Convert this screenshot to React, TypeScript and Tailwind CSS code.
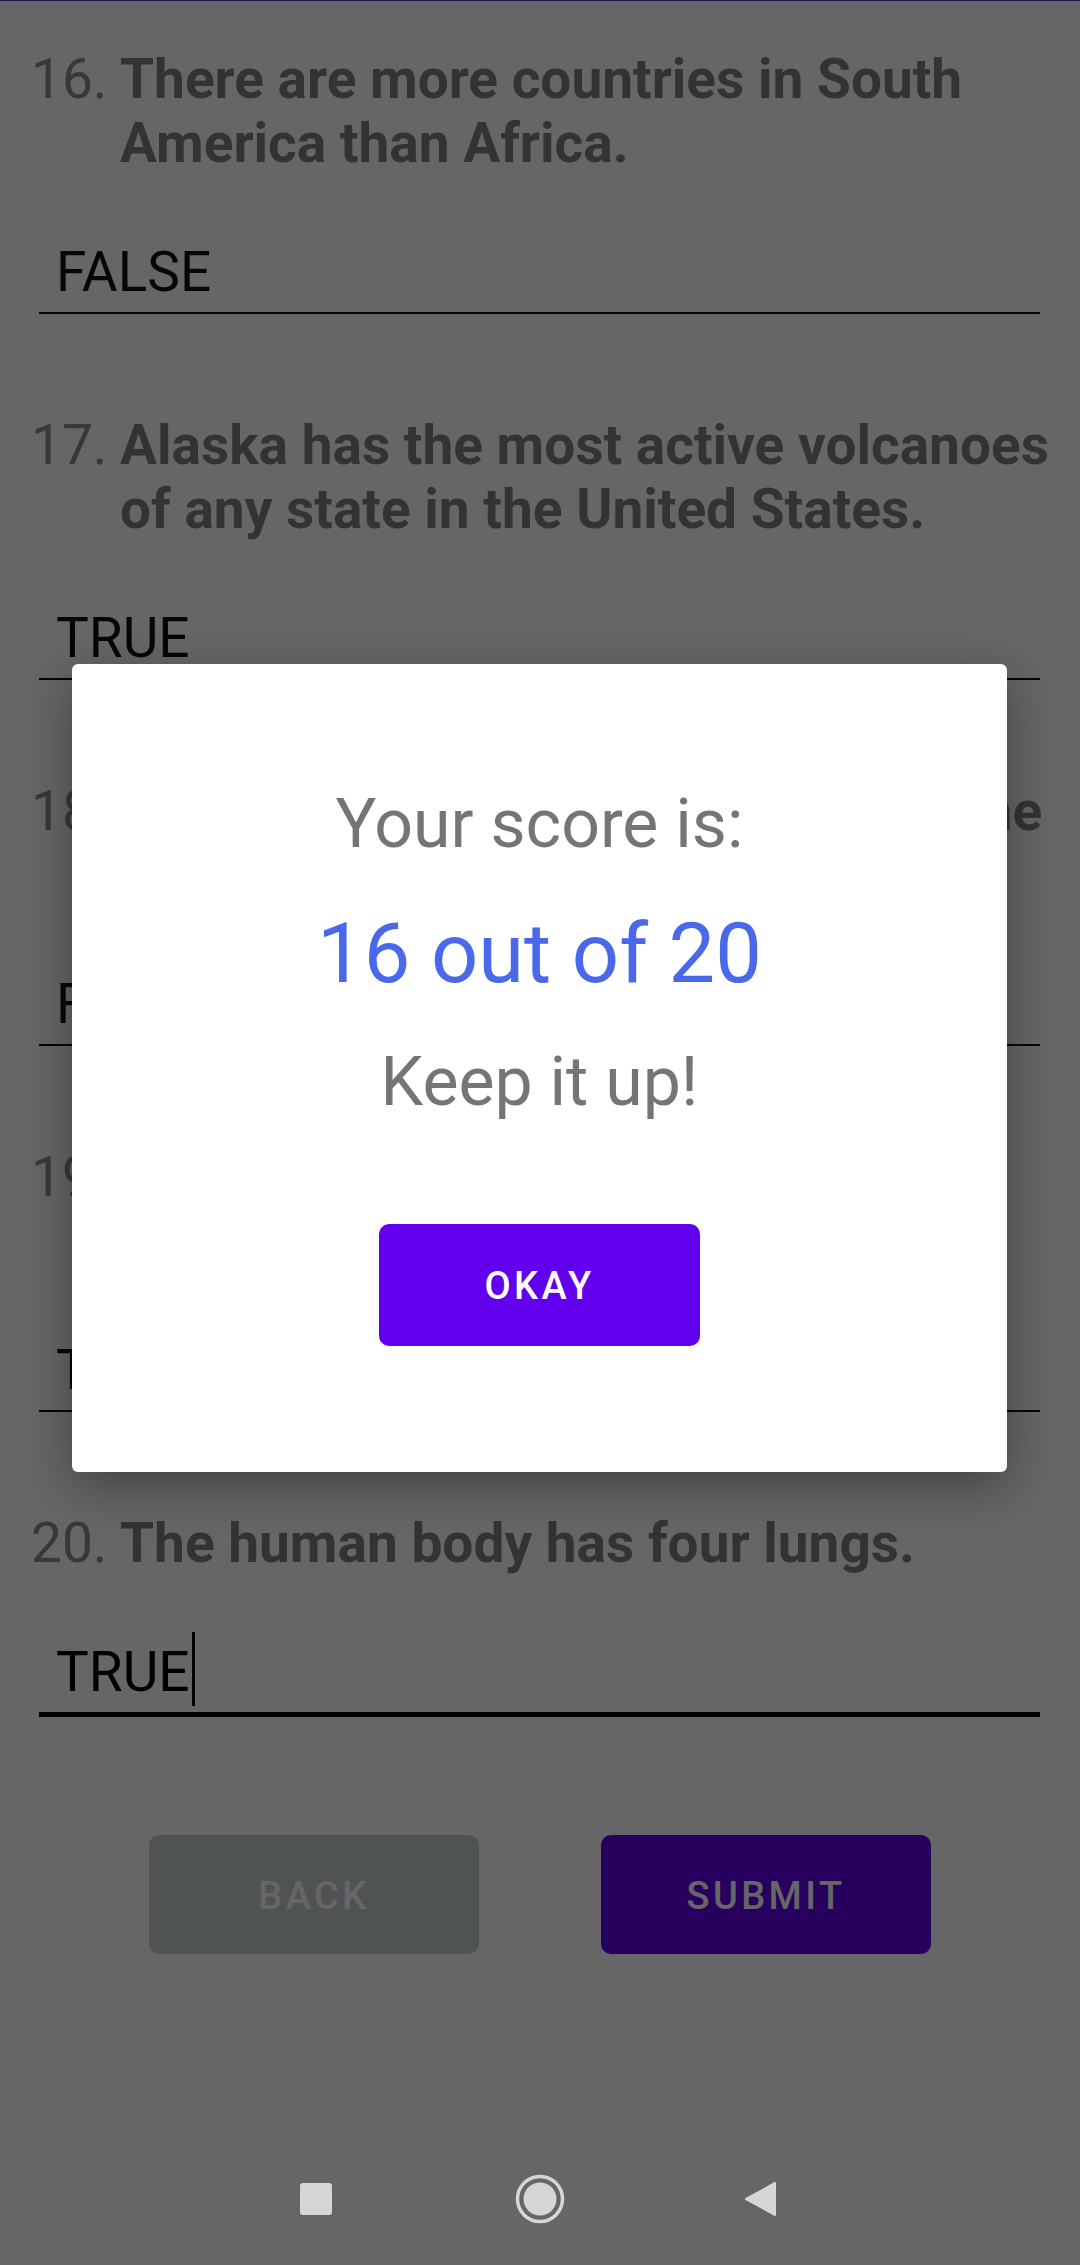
import React from "react";

// Quiz questions shown behind the score dialog
type Question = {
  id: number;
  lines: string[];
  answer: string;
  focused?: boolean;
};

const questions: Question[] = [
  { id: 16, lines: ["There are more countries in South", "America than Africa."], answer: "FALSE" },
  { id: 17, lines: ["Alaska has the most active volcanoes", "of any state in the United States."], answer: "TRUE" },
  { id: 18, lines: ["A human skull is made up of only one", "bone."], answer: "FALSE" },
  { id: 19, lines: ["Venus is the hottest planet in our", "solar system."], answer: "TRUE" },
  { id: 20, lines: ["The human body has four lungs."], answer: "TRUE", focused: true },
];

function QuestionBlock({ q, first }: { q: Question; first: boolean }) {
  return (
    <div className={first ? "pl-[31px]" : "pl-[31px] mt-[99px]"}>
      <div className="flex text-[55px] leading-[64px]">
        <span className="w-[89px] shrink-0 text-[#8c8c8c]">{q.id}.</span>
        <div className="font-bold text-[#808080]">
          {q.lines.map((line) => (
            <div key={line} className="whitespace-nowrap">
              {line}
            </div>
          ))}
        </div>
      </div>
      <div
        className={
          q.focused
            ? "mt-[65px] ml-[8px] w-[1001px] pl-[17px] pb-[8px] border-b-[5px] border-black text-[55px] leading-[64px] text-black"
            : "mt-[65px] ml-[8px] w-[1001px] pl-[17px] pb-[8px] border-b-2 border-[#111] text-[55px] leading-[64px] text-[#111]"
        }
      >
        <span className="relative">
          {q.answer}
          {q.focused && <span className="absolute left-full top-[-8px] ml-[2px] h-[74px] w-[3px] bg-black" />}
        </span>
      </div>
    </div>
  );
}

export default function App() {
  return (
    <div className="relative w-[1080px] h-[2265px] flex flex-col overflow-hidden font-['Roboto',sans-serif]">
      {/* sliver of the status bar */}
      <div className="h-px shrink-0 bg-[#1e1245]" />

      <main className="relative flex-1 bg-white">
        <div className="pt-[46px]">
          {questions.map((q, i) => (
            <QuestionBlock key={q.id} q={q} first={i === 0} />
          ))}

          <div className="mt-[118px] flex justify-center gap-[122px]">
            <button className="w-[330px] h-[119px] pt-[4px] rounded-[10px] bg-[#c8cfd2] text-white text-[38px] font-medium tracking-[0.09em]">
              BACK
            </button>
            <button className="w-[330px] h-[119px] pt-[4px] rounded-[10px] bg-[#6200ee] text-white text-[38px] font-medium tracking-[0.09em]">
              SUBMIT
            </button>
          </div>
        </div>

        {/* dim behind the dialog */}
        <div className="absolute inset-0 bg-black/60" />

        {/* score dialog */}
        <div className="absolute left-[72px] top-[663px] w-[935px] h-[808px] rounded-[6px] bg-white shadow-[0_14px_48px_rgba(0,0,0,0.35)] flex flex-col items-center pt-[120px]">
          <p className="text-[68px] leading-[80px] text-[#757575]">Your score is:</p>
          <p className="mt-[41px] text-[83px] leading-[97px] text-[#4a68ea]">16 out of 20</p>
          <p className="mt-[40px] text-[68px] leading-[80px] text-[#757575]">Keep it up!</p>
          <button className="mt-[102px] w-[321px] h-[122px] pt-[3px] rounded-[10px] bg-[#6200ee] text-white text-[38px] font-medium tracking-[0.09em]">
            OKAY
          </button>
        </div>
      </main>

      {/* navigation bar */}
      <nav className="h-[132px] shrink-0 bg-[#666666] flex justify-center items-center">
        <div className="w-[224px] flex justify-center">
          <svg width="32" height="32" viewBox="0 0 32 32">
            <rect x="0" y="0" width="32" height="32" rx="3" fill="#d6d6d6" />
          </svg>
        </div>
        <div className="w-[224px] flex justify-center">
          <svg width="50" height="50" viewBox="0 0 50 50">
            <circle cx="25" cy="25" r="22.5" fill="none" stroke="#d6d6d6" strokeWidth="3.5" />
            <circle cx="25" cy="25" r="16.5" fill="#d6d6d6" />
          </svg>
        </div>
        <div className="w-[224px] flex justify-center">
          <svg width="40" height="36" viewBox="0 0 40 36">
            <path d="M31 2 L31 34 L2 18 Z" fill="#d6d6d6" stroke="#d6d6d6" strokeWidth="2" strokeLinejoin="round" />
          </svg>
        </div>
      </nav>
    </div>
  );
}
